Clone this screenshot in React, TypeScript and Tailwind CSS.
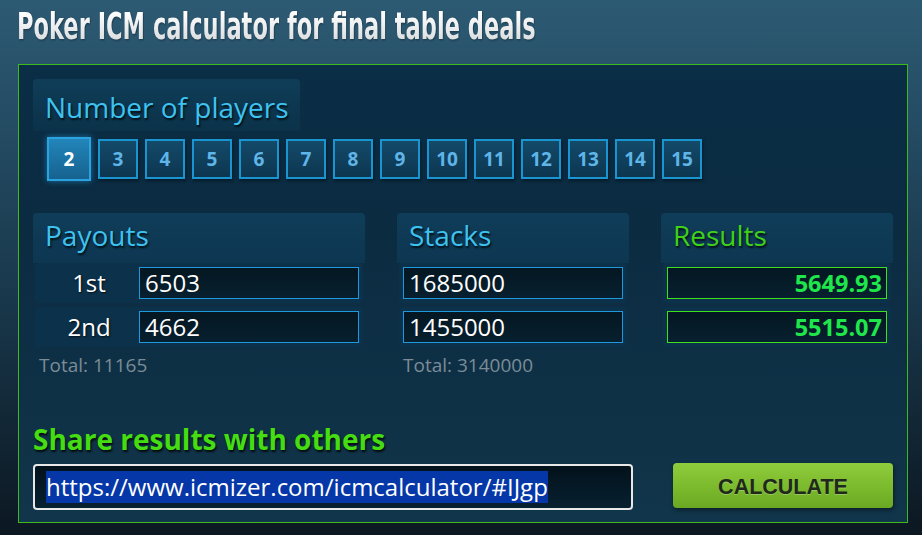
import React from "react";

const nums = [2, 3, 4, 5, 6, 7, 8, 9, 10, 11, 12, 13, 14, 15];

const headerText =
  "text-[28px] leading-[36px] [text-shadow:1px_2px_2px_rgba(0,0,0,0.75)]";

function ColHeader({ title, green }: { title: string; green?: boolean }) {
  return (
    <div className="h-[50px] rounded-t-[4px] bg-[linear-gradient(180deg,#0f3d59,#0d3651)] pl-[12px] pt-[4px]">
      <div className={`${headerText} ${green ? "text-[#3fd01a]" : "text-[#3ec2f0]"}`}>{title}</div>
    </div>
  );
}

function Row({ children }: { children: React.ReactNode }) {
  return (
    <div className="mx-[2px] h-[40px] px-[4px] py-[4px] flex items-center bg-[#0c314a] rounded-[3px]">
      {children}
    </div>
  );
}

function Field({ value, result }: { value: string; result?: boolean }) {
  return (
    <div
      className={`flex-1 h-[32px] flex items-center border ${
        result
          ? "border-[#3ee01e] justify-end pr-[4px] font-bold text-[#1fe64b] text-[23.5px]"
          : "border-[#1f98dc] pl-[5px] text-white text-[24px]"
      } bg-[linear-gradient(180deg,#041722,#07202f)] leading-[30px]`}
    >
      {value}
    </div>
  );
}

export default function App() {
  return (
    <div className="w-[922px] h-[535px] overflow-hidden bg-[linear-gradient(180deg,#2d5a73_0%,#264f67_18%,#19384c_55%,#0c1822_100%)] font-['Open_Sans',sans-serif]">
      <div className="h-[64px] pl-[17px] pt-[2px]">
        <h1 className="inline-block origin-left scale-x-[0.66] whitespace-nowrap font-['DejaVu_Sans_Condensed',sans-serif] font-bold text-[38px] leading-[48px] text-transparent bg-clip-text bg-[linear-gradient(180deg,#ffffff_20%,#cfd3d6_100%)] [filter:drop-shadow(1px_1px_1px_rgba(0,0,0,0.35))]">
          Poker ICM calculator for final table deals
        </h1>
      </div>

      <div className="ml-[18px] w-[890px] h-[459px] border border-[#3dbb1c] bg-[linear-gradient(180deg,#0a2e46_0%,#0b2b41_35%,#11354a_100%)] px-[14px] pt-[14px] pb-[12px] flex flex-col">
        <div className="w-[267px] h-[52px] rounded-t-[4px] bg-[linear-gradient(180deg,#0f3d58,#0b3249)] pl-[12px] pt-[10px]">
          <div className={`${headerText} text-[#3ec2f0]`}>Number of players</div>
        </div>
        <div className="mt-[6px] h-[44px] pl-[14px] flex items-center gap-[7px]">
          {nums.map((n) =>
            n === 2 ? (
              <div
                key={n}
                className="w-[44px] h-[44px] flex items-center justify-center border-2 border-[#2aa3e0] bg-[linear-gradient(180deg,#2285ba,#16628f)] text-white font-bold text-[19px] shadow-[0_0_6px_rgba(40,160,230,0.6)]"
              >
                {n}
              </div>
            ) : (
              <div
                key={n}
                className="w-[40px] h-[40px] flex items-center justify-center border-2 border-[#1a95d2] bg-[linear-gradient(180deg,#134a69,#0d3650)] text-[#5fb4e8] font-bold text-[19px] shadow-[1px_2px_3px_rgba(0,0,0,0.4)]"
              >
                {n}
              </div>
            )
          )}
        </div>

        <div className="mt-[32px] flex gap-[32px]">
          <div className="w-[332px]">
            <ColHeader title="Payouts" />
            <div className="flex flex-col gap-[4px]">
              <Row>
                <div className="w-[100px] text-center text-white text-[24px] leading-[30px] [text-shadow:1px_1px_2px_rgba(0,0,0,0.7)]">1st</div>
                <Field value="6503" />
              </Row>
              <Row>
                <div className="w-[100px] text-center text-white text-[24px] leading-[30px] [text-shadow:1px_1px_2px_rgba(0,0,0,0.7)]">2nd</div>
                <Field value="4662" />
              </Row>
            </div>
            <div className="mt-[5px] pl-[6px] text-[19px] leading-[26px] text-[#7b8c97]">Total: 11165</div>
          </div>

          <div className="w-[232px]">
            <ColHeader title="Stacks" />
            <div className="flex flex-col gap-[4px]">
              <Row>
                <Field value="1685000" />
              </Row>
              <Row>
                <Field value="1455000" />
              </Row>
            </div>
            <div className="mt-[5px] pl-[6px] text-[19px] leading-[26px] text-[#7b8c97]">Total: 3140000</div>
          </div>

          <div className="w-[232px]">
            <ColHeader title="Results" green />
            <div className="flex flex-col gap-[4px]">
              <Row>
                <Field value="5649.93" result />
              </Row>
              <Row>
                <Field value="5515.07" result />
              </Row>
            </div>
          </div>
        </div>

        <div className="mt-auto">
          <div className="text-[28px] leading-[36px] font-bold text-[#45dc12] mb-[7px] [text-shadow:1px_2px_2px_rgba(0,0,0,0.8)]">
            Share results with others
          </div>
          <div className="flex items-start justify-between">
            <div className="w-[600px] h-[46px] border-2 border-[#e8e8e8] rounded-[4px] bg-[linear-gradient(180deg,#03121b,#072030)] pl-[11px] flex items-center">
              <span className="inline-block leading-[32px] text-[24px] text-white bg-[#0537a8]">
                https://www.icmizer.com/icmcalculator/#IJgp
              </span>
            </div>
            <button className="-mt-[1px] w-[220px] h-[45px] pt-[3px] rounded-[4px] bg-[linear-gradient(180deg,#8fcc3d_0%,#79b82b_60%,#6aa823_100%)] shadow-[1px_2px_4px_rgba(0,0,0,0.45)] font-['Liberation_Sans',Arial,sans-serif] font-bold text-[21.5px] text-[#20281c] [text-shadow:0_1px_0_rgba(255,255,255,0.25)]">
              CALCULATE
            </button>
          </div>
        </div>
      </div>
    </div>
  );
}
